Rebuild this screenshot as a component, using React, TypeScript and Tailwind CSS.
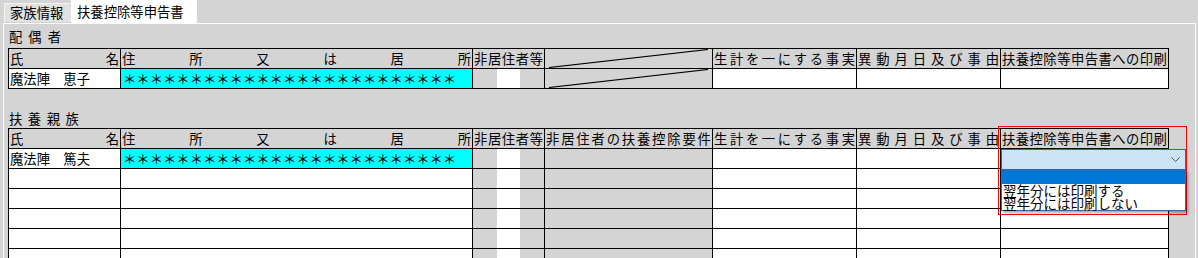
import clsx from 'clsx';

const NAME_W = 'w-[112px]';
const ADDR_W = 'w-[352px]';
const NONRES_W = 'w-[72px]';
const REQ_W = 'w-[168px]';
const LIVE_W = 'w-[144px]';
const CHANGE_W = 'w-[144px]';
const PRINT_W = 'w-[168px]';

function Spread({ text, className }: { text: string; className?: string }) {
  return (
    <div className={clsx('flex h-full items-center justify-between px-[1px]', className)}>
      {[...text].map((c, i) => (
        <span key={i}>{c}</span>
      ))}
    </div>
  );
}

function Cell({
  w,
  className,
  children
}: {
  w: string;
  className?: string;
  children?: React.ReactNode;
}) {
  return (
    <div className={clsx('h-[20px] shrink-0 border-r border-b border-black leading-[19px]', w, className)}>
      {children}
    </div>
  );
}

function NonResident() {
  return (
    <div className="flex h-full">
      <div className="w-[24px] bg-[#d4d4d4]" />
      <div className="w-[23px] bg-white" />
      <div className="flex-1 bg-[#d4d4d4]" />
    </div>
  );
}

function Slash() {
  return (
    <svg width="167" height="19" viewBox="0 0 167 19" className="block">
      <line x1="4" y1="18.5" x2="163" y2="0.5" stroke="#000" strokeWidth="1.2" />
    </svg>
  );
}

function HeaderRow({ fourth }: { fourth?: string }) {
  return (
    <div className="flex">
      <Cell w={NAME_W}>
        <Spread text="氏名" />
      </Cell>
      <Cell w={ADDR_W}>
        <Spread text="住所又は居所" />
      </Cell>
      <Cell w={NONRES_W}>
        <Spread text="非居住者等" className="px-0" />
      </Cell>
      <Cell w={REQ_W}>{fourth ? <Spread text={fourth} /> : <Slash />}</Cell>
      <Cell w={LIVE_W}>
        <Spread text="生計を一にする事実" />
      </Cell>
      <Cell w={CHANGE_W}>
        <Spread text="異動月日及び事由" />
      </Cell>
      <Cell w={PRINT_W}>
        <Spread text="扶養控除等申告書への印刷" className="px-0" />
      </Cell>
    </div>
  );
}

function DataRow({ name, slash }: { name?: string; slash?: boolean }) {
  return (
    <div className="flex">
      <Cell w={NAME_W} className="bg-white pl-[1px]">
        {name}
      </Cell>
      <Cell w={ADDR_W} className={clsx(name ? 'bg-[#00ffff]' : 'bg-white', 'pl-[2px]')}>
        {name ? '＊'.repeat(25) : null}
      </Cell>
      <Cell w={NONRES_W}>
        <NonResident />
      </Cell>
      <Cell w={REQ_W} className="bg-[#d4d4d4]">
        {slash ? <Slash /> : null}
      </Cell>
      <Cell w={LIVE_W} className="bg-white" />
      <Cell w={CHANGE_W} className="bg-white" />
      <Cell w={PRINT_W} className="bg-white" />
    </div>
  );
}

export default function App() {
  return (
    <div className="relative h-[258px] w-[1198px] overflow-hidden bg-[#d4d4d4] font-['Noto_Sans_CJK_JP','Noto_Sans',sans-serif] text-[13.33px] text-black">
      {/* tabs */}
      <div className="flex h-[23px] items-end pl-[4px]">
        <div className="mb-[1px] h-[19px] w-[67px] border-t border-l border-[#f4f4f4] bg-[#e1e1e1] pl-[5px] leading-[18px]">
          家族情報
        </div>
        <div className="h-[23px] w-[126px] bg-white pl-[6px] pt-[2px] leading-[19px]">
          扶養控除等申告書
        </div>
      </div>

      {/* panel */}
      <div className="ml-[3px] w-[1193px] border-t border-r border-l border-white pl-[4px]">
        <div className="h-[24px] pl-[1px] pt-[2px] leading-[22px] tracking-[6px]">配偶者</div>
        <div className="w-[1161px] border-t border-l border-black">
          <HeaderRow />
          <DataRow name="魔法陣　恵子" slash />
        </div>

        <div className="h-[39px] pl-[1px] pt-[20px] leading-[19px] tracking-[5.5px]">扶養親族</div>
        <div className="w-[1161px] border-t border-l border-black">
          <HeaderRow fourth="非居住者の扶養控除要件" />
          <DataRow name="魔法陣　篤夫" />
          <DataRow />
          <DataRow />
          <DataRow />
          <DataRow />
          <DataRow />
        </div>
      </div>

      {/* print option dropdown */}
      <div className="absolute top-[126px] left-[998px] h-[89px] w-[189px] border border-[#ff0000]" />
      <div className="absolute top-[149px] left-[1001px] flex h-[21px] w-[185px] items-center justify-end border border-[#2a6db3] bg-[#cce4f7] pr-[5px]">
        <svg width="9" height="6" viewBox="0 0 9 6">
          <path d="M0.5 0.5 L4.5 4.5 L8.5 0.5" fill="none" stroke="#505050" strokeWidth="1" />
        </svg>
      </div>
      <div className="absolute top-[170px] left-[1001px] w-[185px] border border-[#2a6db3] bg-white text-[13.5px] leading-[13px] shadow-[2px_2px_3px_rgba(0,0,0,0.35)]">
        <div className="h-[13px] bg-[#0078d7]" />
        <div className="h-[13px] pl-[1px]">翌年分には印刷する</div>
        <div className="h-[13px] pl-[1px]">翌年分には印刷しない</div>
      </div>
    </div>
  );
}
